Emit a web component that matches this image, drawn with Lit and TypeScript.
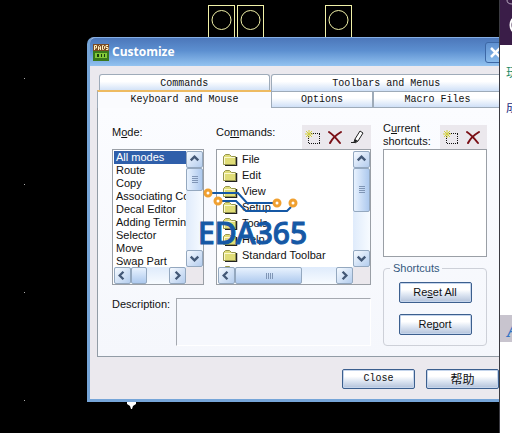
import { LitElement, html, css, svg } from "lit";
import { customElement, property } from "lit/decorators.js";
import { classMap } from "lit/directives/class-map.js";

const newIcon = html`<svg width="16" height="16" viewBox="0 0 16 16" aria-hidden="true">
  <path d="M4 4.500h11M4 14.500h11M3.500 5v10M14.500 5v10" fill="none" stroke="#111" stroke-dasharray="1 1" />
  <path d="M4 1v8M0 5h8M1 2l6 6M7 2L1 8" stroke="#d2cf3c" stroke-width="1" fill="none" />
</svg>`;

const deleteIcon = html`<svg width="16" height="16" viewBox="0 0 16 16" aria-hidden="true">
  <path d="M2 3c3 2 7 6 11 11M14 3C9 6 5 10 3 14" stroke="#7a0f16" stroke-width="2" fill="none" stroke-linecap="round" />
</svg>`;

const pencilIcon = html`<svg width="16" height="16" viewBox="0 0 16 16" aria-hidden="true">
  <path d="M11 2l3 2-5 8-3 2-1-1 1-3z" fill="#fff" stroke="#222" stroke-width="1" />
  <path d="M6 10l3 2-4 2z" fill="#222" />
  <path d="M2 13.500h3" stroke="#222" />
</svg>`;

const folderIcon = html`<svg width="15" height="13" viewBox="0 0 15 13" aria-hidden="true">
  <path d="M2 12.5h11.5V4" stroke="#222" stroke-width="1.5" fill="none" />
  <path d="M.5 11.5v-8l2-2h4l2 2h4v8z" fill="#e0dd78" stroke="#96964e" />
  <path d="M1.5 4.5h10.500M1.500 4v7" stroke="#fbf9d0" fill="none" />
</svg>`;

const arrows: Record<string, string> = {
  up: "M4 9l4-4 4 4",
  down: "M4 6l4 4 4-4",
  left: "M9 4L5 8l4 4",
  right: "M6 4l4 4-4 4",
};

@customElement("scroll-bar")
export class ScrollBar extends LitElement {
  @property({ type: Boolean, reflect: true }) horizontal = false;
  @property({ type: Number }) thumb = 20;
  @property({ type: Boolean }) grip = false;

  static styles = css`
    :host {
      display: flex;
      flex-direction: column;
      width: 17px;
      background: linear-gradient(90deg, #dfebfb, #f7fbff);
    }
    :host([horizontal]) {
      flex-direction: row;
      width: auto;
      height: 17px;
      background: linear-gradient(#dfebfb, #f7fbff);
    }
    .step,
    .thumb {
      box-sizing: border-box;
      flex: none;
      display: flex;
      align-items: center;
      justify-content: center;
      padding: 0;
      border: 1px solid #94a8bf;
      border-radius: 2px;
      background: linear-gradient(135deg, #f6faff, #b4cdee);
    }
    .step {
      width: 17px;
      height: 17px;
    }
    .thumb {
      width: 17px;
      background: linear-gradient(90deg, #e8f2fe, #adc9ee);
    }
    :host([horizontal]) .thumb {
      width: auto;
      height: 17px;
      background: linear-gradient(#e8f2fe, #adc9ee);
    }
    .track {
      flex: 1;
    }
    :host([horizontal]) .grip {
      transform: rotate(90deg);
    }
    svg {
      display: block;
      flex: none;
    }
  `;

  private step(dir: string) {
    return html`<button class="step" aria-label=${dir}>
      <svg width="15" height="15" viewBox="0 0 16 16">
        <path d=${arrows[dir]} fill="none" stroke="#435876" stroke-width="2.5" />
      </svg>
    </button>`;
  }

  render() {
    const size = `${this.horizontal ? "width" : "height"}:${this.thumb}px`;
    return html`
      ${this.step(this.horizontal ? "left" : "up")}
      <div class="thumb" style=${size}>
        ${this.grip
          ? html`<svg class="grip" width="8" height="8" viewBox="0 0 8 8">
              <path d="M1 .5h6M1 2.5h6M1 4.5h6M1 6.5h6" stroke="#7f95b5" />
            </svg>`
          : null}
      </div>
      <div class="track"></div>
      ${this.step(this.horizontal ? "right" : "down")}
    `;
  }
}

@customElement("app-root")
export class AppRoot extends LitElement {
  private modes = [
    "All modes",
    "Route",
    "Copy",
    "Associating Components",
    "Decal Editor",
    "Adding Terminals",
    "Selector",
    "Move",
    "Swap Part",
  ];
  private commands = ["File", "Edit", "View", "Setup", "Tools", "Help", "Standard Toolbar", "Design Toolbar"];

  static styles = css`
    :host {
      display: flex;
      min-height: 100vh;
      background: #000;
      font: 11px/13px "Liberation Sans", "Noto Sans CJK SC", sans-serif;
      color: #111;
    }
    button {
      font: inherit;
      color: inherit;
      padding: 0;
    }
    svg {
      display: block;
    }
    .desktop {
      position: relative;
      flex: 1;
      min-width: 0;
      overflow: hidden;
      padding: 37px 0 31px 87px;
    }
    .board {
      position: absolute;
      left: 0;
      top: 0;
    }
    .dialog {
      position: relative;
      margin-right: -13px;
      border: 3px solid #76a5d8;
      border-top: 1px solid #86aee4;
      border-radius: 7px 7px 0 0;
      background: #ebe9ee;
    }
    .title {
      display: flex;
      align-items: center;
      gap: 3px;
      height: 28px;
      padding: 0 3px;
      border-radius: 5px 5px 0 0;
      background: linear-gradient(#4c77ba, #5c8fd0 45%, #93c3f0);
      color: #fff;
    }
    .title h1 {
      flex: 1;
      margin: 0;
      font: bold 12px/16px "Open Sans", sans-serif;
    }
    .close {
      display: flex;
      align-items: center;
      justify-content: center;
      width: 21px;
      height: 21px;
      border: 1px solid #3d68a6;
      border-radius: 3px;
      background: linear-gradient(#5e90d0, #8abbec);
    }
    .body {
      padding: 8px 7px 10px;
    }
    .tabs {
      display: grid;
      font: 10px/16px "Liberation Mono", monospace;
    }
    .upper {
      grid-template-columns: 171fr 232fr;
      gap: 1px;
      padding-left: 2px;
    }
    .lower {
      grid-template-columns: 174fr 102fr 129fr;
    }
    .tab {
      box-sizing: border-box;
      height: 17px;
      border: 1px solid #9eabb9;
      background: linear-gradient(#fff 40%, #cfe0f7);
    }
    .upper .tab {
      border-bottom: 0;
      border-radius: 3px 3px 0 0;
      line-height: 18px;
    }
    .on {
      height: 18px;
      margin-top: -1px;
      border-top: 2px solid #eebb62;
      border-bottom: 0;
      border-right: 0;
      background: #fafbfe;
    }
    .panel {
      display: grid;
      grid-template-columns: 92fr 155fr 104fr;
      grid-template-rows: auto auto;
      gap: 12px;
      padding: 14px 14px 10px;
      border: 1px solid #929ca6;
      border-top: 0;
      background: linear-gradient(#fbfcff, #f5f7fc);
    }
    .column {
      min-width: 0;
    }
    .keys {
      grid-row: 1 / 3;
      grid-column: 3;
    }
    .head {
      display: flex;
      justify-content: space-between;
      align-items: flex-end;
      height: 27px;
    }
    .label {
      align-self: flex-start;
      padding-top: 4px;
    }
    .two {
      width: 56px;
      padding-top: 0;
    }
    .tools {
      display: flex;
      padding-right: 3px;
      background: #ebe8ed;
    }
    .tool {
      display: flex;
      align-items: center;
      justify-content: center;
      width: 22px;
      height: 24px;
      border: 0;
      background: none;
    }
    .box {
      box-sizing: border-box;
      display: grid;
      grid-template-columns: minmax(0, 1fr) 17px;
      grid-template-rows: 116px 17px;
      height: 136px;
      padding: 1px 0 0 1px;
      border: 1px solid #9a9fa6;
      background: #fff;
    }
    .corner {
      background: #ebe8ed;
    }
    .list {
      margin: 0;
      padding: 0;
      list-style: none;
      overflow: hidden;
      white-space: nowrap;
    }
    .mode {
      padding-left: 2px;
    }
    .picked {
      background: #2f5faa;
      color: #fff;
    }
    .command {
      display: flex;
      align-items: center;
      gap: 4px;
      height: 16px;
      padding-left: 5px;
    }
    .empty {
      box-sizing: border-box;
      height: 108px;
      margin: 0;
      border: 1px solid #9a9fa6;
      background: #fff;
    }
    .about {
      grid-column: 1 / 3;
      display: flex;
    }
    .about label {
      width: 64px;
    }
    .about textarea {
      box-sizing: border-box;
      flex: 1;
      min-width: 0;
      height: 48px;
      border: 1px solid #fff;
      border-top-color: #a5a9b0;
      border-left-color: #a5a9b0;
      background: #f6f8fd;
      resize: none;
    }
    .group {
      display: flex;
      flex-direction: column;
      align-items: center;
      gap: 11px;
      min-width: 0;
      margin: 5px 0 0;
      padding: 7px 0 10px;
      border: 1px solid #cdd0d8;
      border-radius: 4px;
    }
    .group legend {
      margin-left: 6px;
      padding: 0 3px;
      color: #34587e;
    }
    .push {
      box-sizing: border-box;
      width: 73px;
      height: 21px;
      border: 1px solid #3c5f8e;
      border-radius: 2px;
      background: linear-gradient(#fff 35%, #dfe7f3 60%, #b3c2da);
      box-shadow: inset 0 0 0 1px #c5d5ec;
    }
    .actions {
      display: flex;
      justify-content: flex-end;
      gap: 11px;
      padding: 12px 3px 0 0;
      font: 10px/12px "Liberation Mono", monospace;
    }
    .actions .push {
      height: 20px;
    }
    .help {
      font: 12px/14px "Noto Sans CJK SC", sans-serif;
    }
    .logo {
      position: absolute;
      left: 198px;
      top: 188px;
      pointer-events: none;
    }
    .brand {
      font: 500 30px/34px "Noto Sans", sans-serif;
      color: #1558a5;
      -webkit-text-stroke: 1px #1558a5;
    }
    .side {
      flex: none;
      box-sizing: border-box;
      width: 13px;
      overflow: hidden;
      border-left: 1px solid #3b3b42;
      background: #fff;
      font: 12px/16px "Noto Sans CJK SC", sans-serif;
      white-space: nowrap;
    }
    .banner {
      height: 45px;
      background: #3a1d48;
    }
    .link {
      display: block;
      margin: 19px 0 0 6px;
      color: #1d8a68;
      text-decoration: none;
    }
    .dark {
      color: #222a80;
    }
    .strip {
      margin-top: 200px;
      height: 27px;
      padding-left: 7px;
      background: #c8c4ce;
      color: #3474c4;
      font: italic bold 20px/30px "Liberation Serif", serif;
    }
  `;

  private tool(name: string, icon: unknown) {
    return html`<button class="tool" aria-label=${name}>${icon}</button>`;
  }

  private tab(text: string, on = false) {
    return html`<button role="tab" aria-selected=${on} class=${classMap({ tab: true, on })}>${text}</button>`;
  }

  private pad(x: number) {
    return svg`<rect x=${x} y="5.5" width="26" height="34" /><circle cx=${x + 13} cy="20" r="9.5" />`;
  }

  render() {
    return html`
      <main class="desktop">
        <svg class="board" width="400" height="420" aria-hidden="true">
          <g fill="none" stroke="#f1f1a8">${[208.5, 237.5, 325.5].map((x) => this.pad(x))}</g>
          <g fill="#aaa">${[78, 184, 292, 400].map((y) => svg`<rect x="24" y=${y} width="1" height="1" />`)}</g>
          <path d="M127 402h9v2l-3 2-1 3h-1l-1-3-3-2z" fill="#fff" />
        </svg>

        <section class="dialog" role="dialog" aria-labelledby="caption">
          <header class="title">
            <svg width="16" height="17" viewBox="0 0 16 17" aria-hidden="true">
              <rect width="16" height="17" fill="#7a4a22" />
              <rect y="7" width="16" height="10" fill="#39791c" />
              <rect x="2" y="9" width="12" height="5" fill="#83c839" />
              <path d="M4 10h2v3H4zM8 10h1v3H8zM11 10h1v3h-1z" fill="#173c10" />
              <path d="M1.5 6V1.500h2v2.500h-2M5.500 6V2.500l1-1 1 1V6M5.500 4h2M9.500 1.500v4h1l1-1v-2l-1-1zM15 1.500h-2V3.500h2v2h-2" fill="none" stroke="#fff3c4" />
            </svg>
            <h1 id="caption">Customize</h1>
            <button class="close" aria-label="Close window">
              <svg width="13" height="13" viewBox="0 0 13 13">
                <path d="M2 2l9 9M11 2l-9 9" stroke="#fff" stroke-width="2.500" />
              </svg>
            </button>
          </header>

          <div class="body">
            <div class="tabs upper" role="tablist">
              ${this.tab("Commands")}${this.tab("Toolbars and Menus")}
            </div>
            <div class="tabs lower" role="tablist">
              ${this.tab("Keyboard and Mouse", true)}${this.tab("Options")}${this.tab("Macro Files")}
            </div>

            <div class="panel" role="tabpanel">
              <div class="column">
                <div class="head"><span class="label" id="mode">M<u>o</u>de:</span></div>
                <div class="box">
                  <ul class="list" role="listbox" aria-labelledby="mode">
                    ${this.modes.map(
                      (m, i) => html`<li role="option" aria-selected=${i === 0} class=${classMap({ mode: true, picked: i === 0 })}>${m}</li>`
                    )}
                  </ul>
                  <scroll-bar .thumb=${23} .grip=${true}></scroll-bar>
                  <scroll-bar horizontal .thumb=${16}></scroll-bar>
                  <div class="corner"></div>
                </div>
              </div>

              <div class="column">
                <div class="head">
                  <span class="label" id="commands">Co<u>m</u>mands:</span>
                  <div class="tools">
                    ${this.tool("New", newIcon)}${this.tool("Delete", deleteIcon)}${this.tool("Edit", pencilIcon)}
                  </div>
                </div>
                <div class="box">
                  <ul class="list" role="listbox" aria-labelledby="commands">
                    ${this.commands.map((c) => html`<li role="option" class="command">${folderIcon}${c}</li>`)}
                  </ul>
                  <scroll-bar .thumb=${44} .grip=${true}></scroll-bar>
                  <scroll-bar horizontal .thumb=${67} .grip=${true}></scroll-bar>
                  <div class="corner"></div>
                </div>
              </div>

              <div class="column keys">
                <div class="head">
                  <span class="label two" id="current">C<u>u</u>rrent shortcuts:</span>
                  <div class="tools">${this.tool("New shortcut", newIcon)}${this.tool("Delete shortcut", deleteIcon)}</div>
                </div>
                <ul class="list empty" role="listbox" aria-labelledby="current"></ul>
                <fieldset class="group">
                  <legend>Shortcuts</legend>
                  <button class="push">Re<u>s</u>et All</button>
                  <button class="push">Re<u>p</u>ort</button>
                </fieldset>
              </div>

              <div class="about">
                <label for="description">Description:</label>
                <textarea id="description" readonly></textarea>
              </div>
            </div>

            <footer class="actions">
              <button class="push">Close</button>
              <button class="push help">帮助</button>
            </footer>
          </div>
        </section>

        <div class="logo">
          <svg width="104" height="28" viewBox="0 0 104 28" aria-hidden="true">
            <path d="M14 5h26l9 10h26M24 13h14l10 10h41l4-4" fill="none" stroke="#1558a5" stroke-width="2" />
            <g fill="#fff" stroke="#f0a030" stroke-width="3">
              <circle cx="10" cy="5" r="3" />
              <circle cx="20" cy="13" r="3" />
              <circle cx="79" cy="15" r="3" />
              <circle cx="95" cy="15" r="3" />
            </g>
          </svg>
          <div class="brand">EDA365</div>
        </div>
      </main>

      <aside class="side">
        <div class="banner">
          <svg width="12" height="45" viewBox="0 0 12 45" aria-hidden="true">
            <path d="M7 0q0 4 5 4" fill="none" stroke="#b8a8c0" />
            <ellipse cx="15" cy="25" rx="4.500" ry="7" fill="none" stroke="#fff" stroke-width="2" />
          </svg>
        </div>
        <a class="link" href="#">玩</a>
        <a class="link dark" href="#">成</a>
        <div class="strip">A</div>
      </aside>
    `;
  }
}
